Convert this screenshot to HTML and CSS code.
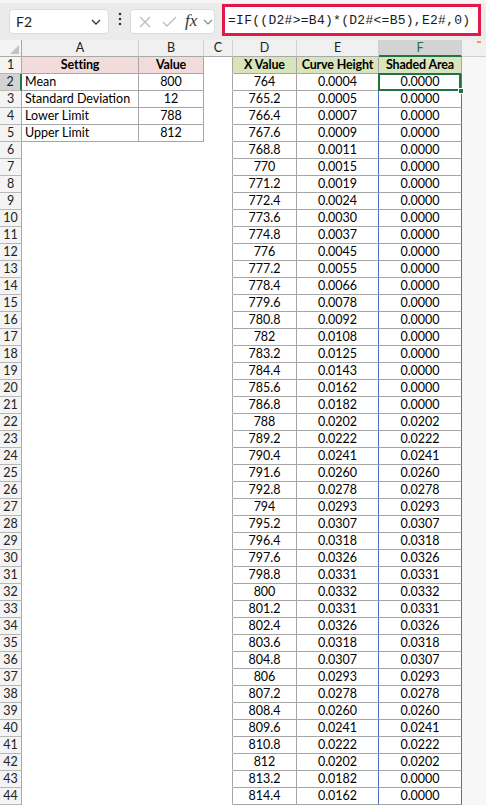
FILE: index.html
```html
<!DOCTYPE html>
<html>
<head>
<meta charset="utf-8">
<link rel="stylesheet" href="styles.css">
</head>
<body>
<div class="app">
  <div class="topbar">
    <div class="namebox"><span>F2</span><svg class="chev" width="10" height="6" viewBox="0 0 10 6"><path d="M1 1l4 4 4-4" fill="none" stroke="#333" stroke-width="1.3"/></svg></div>
    <div class="dots"><svg width="4" height="14" viewBox="0 0 4 14"><circle cx="2" cy="2" r="1.3" fill="#333"/><circle cx="2" cy="7" r="1.3" fill="#333"/><circle cx="2" cy="12" r="1.3" fill="#333"/></svg></div>
    <div class="fxbox">
      <svg class="ico-x" width="12" height="12" viewBox="0 0 12 12"><path d="M1 1l10 10M11 1L1 11" stroke="#bcbcbc" stroke-width="1.3" fill="none"/></svg>
      <svg class="ico-ok" width="15" height="11" viewBox="0 0 15 11"><path d="M1 6l4 4L14 1" stroke="#bcbcbc" stroke-width="1.3" fill="none"/></svg>
      <span class="fx">fx</span>
      <svg class="chev2" width="10" height="6" viewBox="0 0 10 6"><path d="M1 1l4 4 4-4" fill="none" stroke="#8a8a8a" stroke-width="1.2"/></svg>
    </div>
    <div class="formula">=IF((D2#&gt;=B4)*(D2#&lt;=B5),E2#,0)</div>
  </div>
  <div class="sheet">
    <div class="row colhdr"><span class="corner"><svg width="9" height="9" viewBox="0 0 9 9"><path d="M9 0V9H0z" fill="#c3c3c3"/></svg></span><span>A</span><span>B</span><span>C</span><span>D</span><span>E</span><span class="selcol">F</span><span class="gcol"><i class="omark"></i></span></div>
    <div class="row t h"><span>1</span><span>Setting</span><span>Value</span><span></span><span>X Value</span><span>Curve Height</span><span>Shaded Area</span><span></span></div>
    <div class="row t selrow"><span>2</span><span>Mean</span><span>800</span><span></span><span>764</span><span>0.0004</span><span class="active">0.0000<i class="handle"></i></span><span></span></div>
    <div class="row t"><span>3</span><span>Standard Deviation</span><span>12</span><span></span><span>765.2</span><span>0.0005</span><span>0.0000</span><span></span></div>
    <div class="row t"><span>4</span><span>Lower Limit</span><span>788</span><span></span><span>766.4</span><span>0.0007</span><span>0.0000</span><span></span></div>
    <div class="row t"><span>5</span><span>Upper Limit</span><span>812</span><span></span><span>767.6</span><span>0.0009</span><span>0.0000</span><span></span></div>
    <div class="row"><span>6</span><span></span><span></span><span></span><span>768.8</span><span>0.0011</span><span>0.0000</span><span></span></div>
    <div class="row"><span>7</span><span></span><span></span><span></span><span>770</span><span>0.0015</span><span>0.0000</span><span></span></div>
    <div class="row"><span>8</span><span></span><span></span><span></span><span>771.2</span><span>0.0019</span><span>0.0000</span><span></span></div>
    <div class="row"><span>9</span><span></span><span></span><span></span><span>772.4</span><span>0.0024</span><span>0.0000</span><span></span></div>
    <div class="row"><span>10</span><span></span><span></span><span></span><span>773.6</span><span>0.0030</span><span>0.0000</span><span></span></div>
    <div class="row"><span>11</span><span></span><span></span><span></span><span>774.8</span><span>0.0037</span><span>0.0000</span><span></span></div>
    <div class="row"><span>12</span><span></span><span></span><span></span><span>776</span><span>0.0045</span><span>0.0000</span><span></span></div>
    <div class="row"><span>13</span><span></span><span></span><span></span><span>777.2</span><span>0.0055</span><span>0.0000</span><span></span></div>
    <div class="row"><span>14</span><span></span><span></span><span></span><span>778.4</span><span>0.0066</span><span>0.0000</span><span></span></div>
    <div class="row"><span>15</span><span></span><span></span><span></span><span>779.6</span><span>0.0078</span><span>0.0000</span><span></span></div>
    <div class="row"><span>16</span><span></span><span></span><span></span><span>780.8</span><span>0.0092</span><span>0.0000</span><span></span></div>
    <div class="row"><span>17</span><span></span><span></span><span></span><span>782</span><span>0.0108</span><span>0.0000</span><span></span></div>
    <div class="row"><span>18</span><span></span><span></span><span></span><span>783.2</span><span>0.0125</span><span>0.0000</span><span></span></div>
    <div class="row"><span>19</span><span></span><span></span><span></span><span>784.4</span><span>0.0143</span><span>0.0000</span><span></span></div>
    <div class="row"><span>20</span><span></span><span></span><span></span><span>785.6</span><span>0.0162</span><span>0.0000</span><span></span></div>
    <div class="row"><span>21</span><span></span><span></span><span></span><span>786.8</span><span>0.0182</span><span>0.0000</span><span></span></div>
    <div class="row"><span>22</span><span></span><span></span><span></span><span>788</span><span>0.0202</span><span>0.0202</span><span></span></div>
    <div class="row"><span>23</span><span></span><span></span><span></span><span>789.2</span><span>0.0222</span><span>0.0222</span><span></span></div>
    <div class="row"><span>24</span><span></span><span></span><span></span><span>790.4</span><span>0.0241</span><span>0.0241</span><span></span></div>
    <div class="row"><span>25</span><span></span><span></span><span></span><span>791.6</span><span>0.0260</span><span>0.0260</span><span></span></div>
    <div class="row"><span>26</span><span></span><span></span><span></span><span>792.8</span><span>0.0278</span><span>0.0278</span><span></span></div>
    <div class="row"><span>27</span><span></span><span></span><span></span><span>794</span><span>0.0293</span><span>0.0293</span><span></span></div>
    <div class="row"><span>28</span><span></span><span></span><span></span><span>795.2</span><span>0.0307</span><span>0.0307</span><span></span></div>
    <div class="row"><span>29</span><span></span><span></span><span></span><span>796.4</span><span>0.0318</span><span>0.0318</span><span></span></div>
    <div class="row"><span>30</span><span></span><span></span><span></span><span>797.6</span><span>0.0326</span><span>0.0326</span><span></span></div>
    <div class="row"><span>31</span><span></span><span></span><span></span><span>798.8</span><span>0.0331</span><span>0.0331</span><span></span></div>
    <div class="row"><span>32</span><span></span><span></span><span></span><span>800</span><span>0.0332</span><span>0.0332</span><span></span></div>
    <div class="row"><span>33</span><span></span><span></span><span></span><span>801.2</span><span>0.0331</span><span>0.0331</span><span></span></div>
    <div class="row"><span>34</span><span></span><span></span><span></span><span>802.4</span><span>0.0326</span><span>0.0326</span><span></span></div>
    <div class="row"><span>35</span><span></span><span></span><span></span><span>803.6</span><span>0.0318</span><span>0.0318</span><span></span></div>
    <div class="row"><span>36</span><span></span><span></span><span></span><span>804.8</span><span>0.0307</span><span>0.0307</span><span></span></div>
    <div class="row"><span>37</span><span></span><span></span><span></span><span>806</span><span>0.0293</span><span>0.0293</span><span></span></div>
    <div class="row"><span>38</span><span></span><span></span><span></span><span>807.2</span><span>0.0278</span><span>0.0278</span><span></span></div>
    <div class="row"><span>39</span><span></span><span></span><span></span><span>808.4</span><span>0.0260</span><span>0.0260</span><span></span></div>
    <div class="row"><span>40</span><span></span><span></span><span></span><span>809.6</span><span>0.0241</span><span>0.0241</span><span></span></div>
    <div class="row"><span>41</span><span></span><span></span><span></span><span>810.8</span><span>0.0222</span><span>0.0222</span><span></span></div>
    <div class="row"><span>42</span><span></span><span></span><span></span><span>812</span><span>0.0202</span><span>0.0202</span><span></span></div>
    <div class="row"><span>43</span><span></span><span></span><span></span><span>813.2</span><span>0.0182</span><span>0.0000</span><span></span></div>
    <div class="row"><span>44</span><span></span><span></span><span></span><span>814.4</span><span>0.0162</span><span>0.0000</span><span></span></div>
  </div>
</div>
</body>
</html>
```

FILE: styles.css
```css
* { box-sizing: border-box; }
body { margin: 0; background: #fff; font-family: Lato, "Liberation Sans", sans-serif; }
.app { width: 486px; height: 805px; overflow: hidden; }

.topbar {
  height: 40px;
  background: #ebebeb;
  display: flex;
  align-items: flex-start;
  border-top: 3px solid #f6f6f6;
}
.namebox {
  margin: 6px 0 0 9px;
  width: 100px;
  height: 25px;
  background: #fff;
  border: 1px solid #dcdcdc;
  border-radius: 4px;
  display: flex;
  align-items: center;
  justify-content: space-between;
  padding: 0 7px 0 6px;
  font-size: 14px;
  color: #222;
}
.dots { width: 21px; height: 31px; display: flex; align-items: center; justify-content: center; }
.fxbox {
  margin-top: 6px;
  width: 85px;
  height: 25px;
  background: #fff;
  border: 1px solid #dcdcdc;
  border-radius: 4px;
  display: flex;
  align-items: center;
  padding-left: 8px;
}
.ico-x { margin-right: 11px; }
.ico-ok { margin-right: 8px; }
.fx {
  font-family: "Liberation Serif", serif;
  font-style: italic;
  font-size: 17px;
  color: #333;
  line-height: 20px;
  margin-top: -2px;
}
.chev2 { margin-left: 6px; }
.formula {
  margin: 1px 0 0 7px;
  width: 259px;
  height: 32px;
  background: #fff;
  border: 3px solid #e2184b;
  font-family: "Liberation Mono", monospace;
  font-size: 13px;
  letter-spacing: 0.28px;
  line-height: 27px;
  color: #1a1a1a;
  padding-left: 3px;
  white-space: nowrap;
}

.row {
  display: grid;
  grid-template-columns: 22px 117px 65px 29px 64px 82px 83px 1fr;
  height: 17px;
  font-size: 12.5px;
  line-height: 16px;
  color: #000;
}
.row > span {
  display: block;
  text-align: center;
  white-space: nowrap;
  overflow: hidden;
  border-bottom: 1px solid transparent;
}
.row > :nth-child(1) {
  background: #f4f4f4;
  border-right: 1px solid #a9a9a9;
  border-bottom: 1px solid #b8b8b8;
  color: #222;
  font-size: 12.5px;
}
.row > :nth-child(2) { text-align: left; padding-left: 3px; }
.row > :nth-child(4) { border-right: 1px solid #a6a6a6; }
.row > :nth-child(5),
.row > :nth-child(6),
.row > :nth-child(7) {
  border-right: 1px solid #a6a6a6;
  border-bottom: 1px solid #a6a6a6;
}
.row.t > :nth-child(2),
.row.t > :nth-child(3) {
  border-right: 1px solid #a6a6a6;
  border-bottom: 1px solid #a6a6a6;
}
.row:not(.h):not(.colhdr) > :nth-child(6) { border-right-color: #4a6fc4; }
.row:not(.h):not(.colhdr) > :nth-child(7) { border-right-color: #4a6fc4; }
.row > :nth-child(8) { background: #f7f7f7; border: none; }

.row.h > :nth-child(2), .row.h > :nth-child(3) { background: #f2dcdb; text-align: center; padding-left: 0; }
.row.h > :nth-child(5), .row.h > :nth-child(6), .row.h > :nth-child(7) { background: #d8e4bc; }
.row.h > span:not(:first-child) { font-weight: bold; letter-spacing: -0.15px; }

.colhdr > span {
  background: #f0f0f0;
  border-right: 1px solid #cfcfcf;
  border-bottom: 1px solid #a9a9a9;
  color: #222;
  text-align: center;
  font-size: 12.5px;
}
.colhdr > :nth-child(1) { border-right: 1px solid #a9a9a9; border-bottom: 1px solid #a9a9a9; }
.colhdr > :nth-child(2) { padding-left: 0; text-align: center; }
.colhdr > :nth-child(4) { border-right: 1px solid #cfcfcf; }
.colhdr > :nth-child(5),
.colhdr > :nth-child(6) { border-right: 1px solid #cfcfcf; border-bottom: 1px solid #a9a9a9; }
.colhdr > .selcol {
  background: #d3d3d3;
  color: #217346;
  border-right: 1px solid #cfcfcf;
  border-bottom: 2px solid #217346;
}
.colhdr > .gcol { background: #f0f0f0; border-bottom: 1px solid #d0d0d0; position: relative; }
.omark { position: absolute; left: 15px; top: 1px; width: 4px; height: 2px; background: #f0a030; }
.corner { display: flex !important; align-items: flex-end; justify-content: flex-end; padding: 0 2px 2px 0; }

.selrow > :nth-child(1) {
  background: #d3d3d3;
  border-right: 2px solid #217346;
}
.row > .active { position: relative; overflow: visible; }
.active::after {
  content: "";
  position: absolute;
  left: -1px;
  right: 0;
  top: -1px;
  bottom: -1px;
  border: 2px solid #217346;
  z-index: 2;
}
.handle {
  position: absolute;
  right: -3px;
  bottom: -4px;
  width: 6px;
  height: 6px;
  background: #217346;
  border: 1px solid #fff;
  z-index: 3;
}
```
